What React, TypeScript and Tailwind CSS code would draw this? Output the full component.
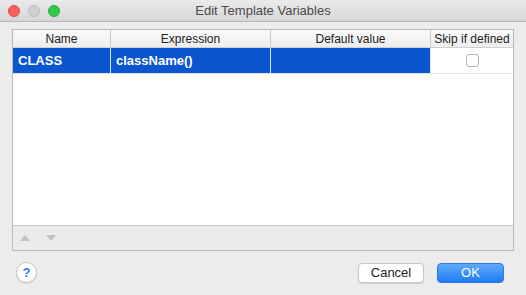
import React from "react";

const columns = [
  { label: "Name", width: "w-[98px]" },
  { label: "Expression", width: "w-[160px]" },
  { label: "Default value", width: "w-[160px]" },
  { label: "Skip if defined", width: "flex-1" },
];

export default function App() {
  return (
    <div className="w-[526px] h-[295px] bg-[#ececec] flex flex-col font-['Helvetica','Liberation_Sans',sans-serif] text-[#222]">
      {/* title bar */}
      <div className="h-[22px] shrink-0 relative flex items-center justify-center bg-gradient-to-b from-[#ebebeb] to-[#d6d6d6] border-b border-[#b8b8b8]">
        <div className="absolute left-[8px] top-[5px] flex gap-[8px]">
          <span className="w-[12px] h-[12px] rounded-full bg-[#fc605c] border border-[#de4a46]" />
          <span className="w-[12px] h-[12px] rounded-full bg-[#d1d1d1] border border-[#bdbdbd]" />
          <span className="w-[12px] h-[12px] rounded-full bg-[#34c84a] border border-[#28a93c]" />
        </div>
        <span className="text-[13px] text-[#4a4a4a]">Edit Template Variables</span>
      </div>

      {/* table */}
      <div className="mx-[12px] mt-[7px] h-[222px] border border-[#b9b9b9] flex flex-col">
        <div className="flex-1 bg-white flex flex-col">
          <div className="h-[18px] flex bg-gradient-to-b from-[#fafafa] to-[#ededed] border-b border-[#cfcfcf] text-[12px] text-[#222]">
            {columns.map((c, i) => (
              <div
                key={c.label}
                className={`${c.width} flex items-center justify-center ${i < 3 ? "border-r border-[#c8c8c8]" : ""}`}
              >
                {c.label}
              </div>
            ))}
          </div>
          <div className="h-[26px] flex border-b border-[#e3e3e3] text-[13px] font-semibold">
            <div className="w-[98px] bg-[#0b55cf] text-white flex items-center px-[5px] border-r border-[#dbe4f5]">CLASS</div>
            <div className="w-[160px] bg-[#0b55cf] text-white flex items-center px-[5px] border-r border-[#dbe4f5]">className()</div>
            <div className="w-[160px] bg-[#0b55cf] border-r border-[#dbe4f5]" />
            <div className="flex-1 bg-white flex items-center justify-center">
              <span className="w-[13px] h-[13px] rounded-[3px] border border-[#b5b5b5] bg-white" />
            </div>
          </div>
        </div>
        <div className="h-[25px] shrink-0 bg-[#ebebeb] border-t border-[#c4c4c4] flex items-center gap-[14px] pl-[6px]">
          <svg width="12" height="8" viewBox="0 0 12 8">
            <path d="M6 1 L11 7 L1 7 Z" fill="#c2c2c2" />
          </svg>
          <svg width="12" height="8" viewBox="0 0 12 8">
            <path d="M1 1 L11 1 L6 7 Z" fill="#c2c2c2" />
          </svg>
        </div>
      </div>

      {/* bottom buttons */}
      <div className="flex items-center mt-[11px] pl-[16px] pr-[22px]">
        <div className="w-[21px] h-[21px] rounded-full bg-white border border-[#c4c4c4] shadow-[0_1px_1px_rgba(0,0,0,0.1)] flex items-center justify-center text-[13px] font-bold text-[#2f7df6]">
          ?
        </div>
        <div className="flex-1" />
        <button className="w-[66px] h-[20px] rounded-[4px] bg-white border border-[#c6c6c6] shadow-[0_1px_1px_rgba(0,0,0,0.12)] text-[13px] text-[#222] flex items-center justify-center">
          Cancel
        </button>
        <button className="ml-[13px] w-[67px] h-[20px] rounded-[4px] bg-gradient-to-b from-[#5fa9fa] to-[#1b7cf3] border border-[#2a7ae8] text-[13px] text-white flex items-center justify-center">
          OK
        </button>
      </div>
    </div>
  );
}
